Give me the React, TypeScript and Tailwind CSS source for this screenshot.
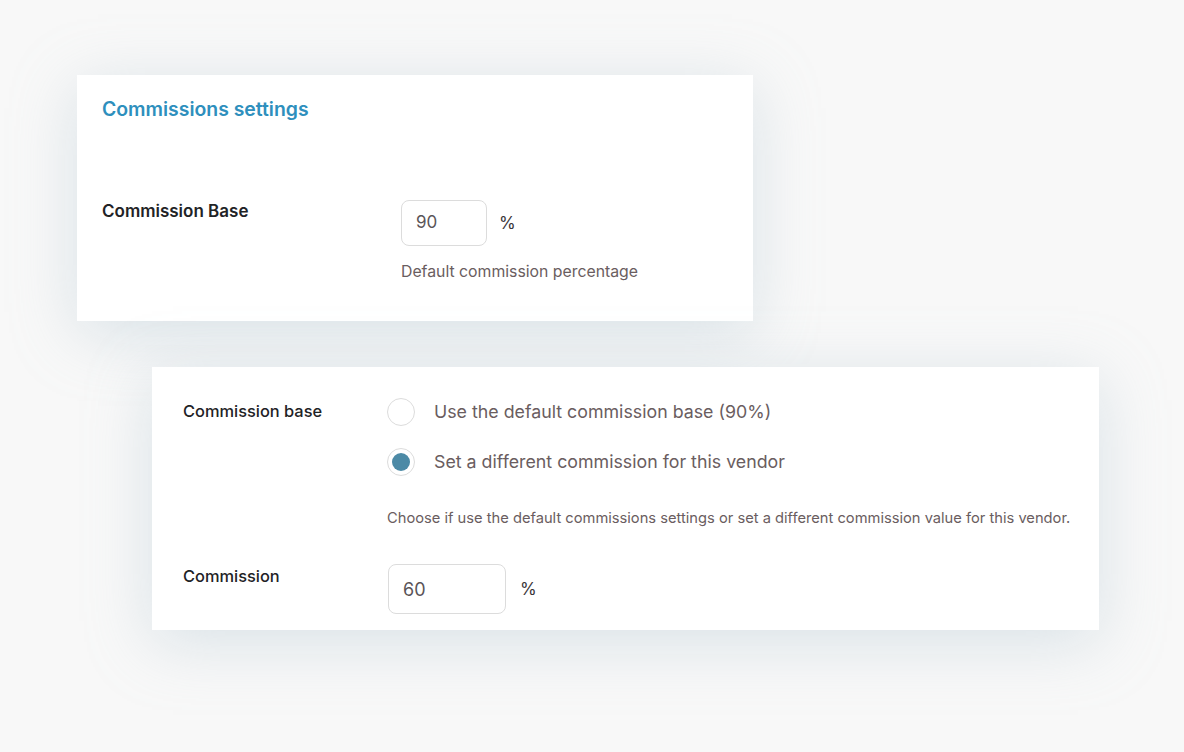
import React from 'react';

const font = { fontFamily: 'Inter, "Noto Sans", sans-serif' };

function Radio({ checked, label }: { checked?: boolean; label: string }) {
  return (
    <label className="flex h-[28px] items-center gap-[19px]">
      <span className="flex h-[28px] w-[28px] shrink-0 items-center justify-center rounded-full border border-[#dcdcdc] bg-white">
        {checked && <span className="h-[18px] w-[18px] rounded-full bg-[#4c8aa6]" />}
      </span>
      <span className="text-[17.8px] text-[#6a5d60]">{label}</span>
    </label>
  );
}

export default function App() {
  return (
    <div className="h-[752px] w-[1184px] overflow-hidden bg-[#f8f8f8] pl-[77px] pt-[75px]" style={font}>
      {/* Global settings card */}
      <div className="h-[246px] w-[676px] bg-white pl-[25px] pt-[22px] shadow-[0_12px_60px_rgba(160,185,200,0.35)]">
        <h2 className="text-[19.4px] font-semibold leading-[24px] text-[#2e8fbd]">Commissions settings</h2>
        <div className="mt-[79px] flex">
          <div className="mt-[1px] w-[299px] text-[17px] font-semibold leading-[20px] text-[#1f2326]">
            Commission Base
          </div>
          <div>
            <div className="flex items-center gap-[12px]">
              <div className="flex h-[46px] w-[86px] items-center rounded-[8px] border border-[#dcdcdc] pl-[14px] text-[17px] text-[#5a5558]">
                90
              </div>
              <span className="mt-[1px] text-[17px] text-[#3a3538]">%</span>
            </div>
            <p className="mt-[16px] text-[15.8px] leading-[20px] text-[#6a5d60]">Default commission percentage</p>
          </div>
        </div>
      </div>

      {/* Vendor card */}
      <div className="ml-[75px] mt-[46px] h-[263px] w-[947px] bg-white pl-[31px] pt-[31px] shadow-[0_12px_60px_rgba(160,185,200,0.35)]">
        <div className="flex">
          <div className="mt-[3px] w-[204px] text-[16.4px] font-medium leading-[20px] text-[#1f2326]">Commission base</div>
          <div>
            <div className="flex flex-col gap-[22px]">
              <Radio label="Use the default commission base (90%)" />
              <Radio checked label="Set a different commission for this vendor" />
            </div>
            <p className="mt-[33px] text-[14.7px] leading-[18px] text-[#6a5d60]">
              Choose if use the default commissions settings or set a different commission value for this vendor.
            </p>
          </div>
        </div>
        <div className="mt-[37px] flex">
          <div className="mt-[2px] w-[205px] text-[16.4px] font-medium leading-[20px] text-[#1f2326]">Commission</div>
          <div className="flex items-center gap-[14px]">
            <div className="flex h-[50px] w-[118px] items-center rounded-[8px] border border-[#dcdcdc] pl-[14px] text-[18px] text-[#5a5558]">
              60
            </div>
            <span className="mt-[2px] text-[17px] text-[#3a3538]">%</span>
          </div>
        </div>
      </div>
    </div>
  );
}
